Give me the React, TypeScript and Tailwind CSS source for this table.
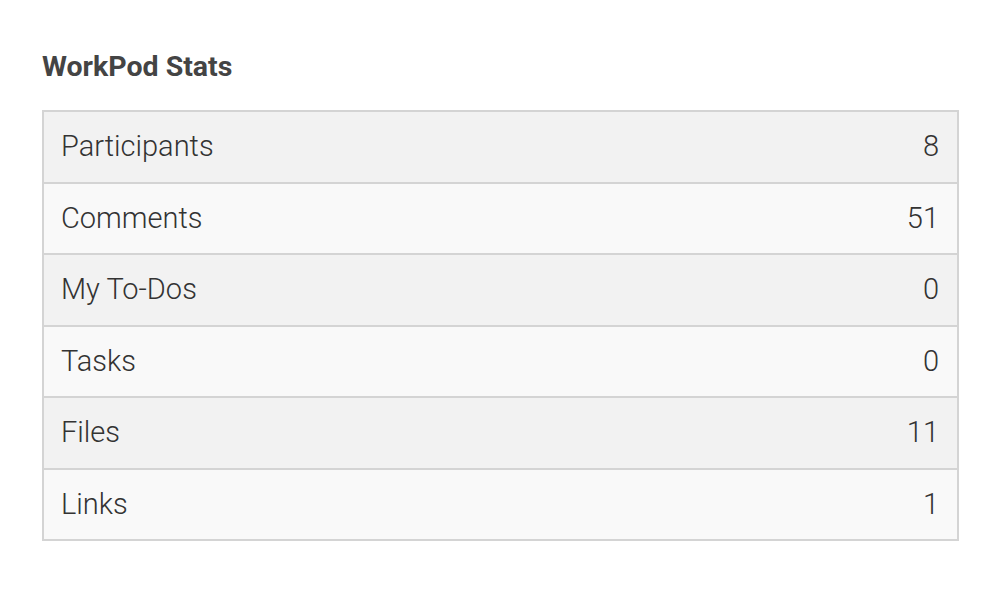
import React from "react";

const stats = [
  { label: "Participants", value: 8 },
  { label: "Comments", value: 51 },
  { label: "My To-Dos", value: 0 },
  { label: "Tasks", value: 0 },
  { label: "Files", value: 11 },
  { label: "Links", value: 1 },
];

export default function App() {
  return (
    <div className="min-h-screen bg-white pl-[42px] pr-[41px] pt-[48px] font-['Roboto',sans-serif]">
      <h2 className="text-[28.5px] leading-[38px] font-bold text-[#444] mb-[24px]">WorkPod Stats</h2>
      <table className="w-full border-collapse border-2 border-[#d4d4d4]">
        <tbody>
          {stats.map((s, i) => (
            <tr
              key={s.label}
              className={(i % 2 === 0 ? "bg-[#f2f2f2]" : "bg-[#f9f9f9]") + " border-b-2 border-[#d4d4d4]"}
            >
              <td className="h-[71.5px] pl-[17px] text-[29px] font-light text-[#333]">{s.label}</td>
              <td className="h-[71.5px] pr-[18px] text-right text-[29px] font-light text-[#333]">{s.value}</td>
            </tr>
          ))}
        </tbody>
      </table>
    </div>
  );
}
